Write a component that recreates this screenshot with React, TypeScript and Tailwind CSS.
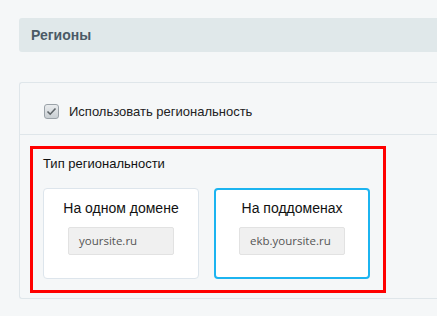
export default function App() {
  return (
    <div className="min-h-[316px] w-[437px] overflow-hidden bg-[#f5f7f8] pt-[18px] pl-[19px] font-['Liberation_Sans',Arial,sans-serif]">
      <div className="flex h-[34px] w-[440px] items-center rounded-l-[3px] bg-[#e0e8ea] pl-3 text-[14px] font-bold text-[#4b5a66]">
        Регионы
      </div>
      <div className="mt-[30px] w-[440px] rounded-l-[3px] border border-r-0 border-[#dfe6ea] bg-[#f5f7f8]">
        <div className="flex h-[52px] items-start border-b border-[#dfe6ea] pt-[21px] pl-[24px]">
          <span className="flex h-[15px] w-[15px] items-center justify-center rounded-[3px] border border-[#9aa2a8] bg-gradient-to-b from-[#e9ecee] to-[#c9cfd3]">
            <svg width="11" height="9" viewBox="0 0 11 9" fill="none">
              <path d="M1.5 4.5 L4.2 7.2 L9.5 1.5" stroke="#5d6468" strokeWidth="1.6" />
            </svg>
          </span>
          <span className="ml-[10px] text-[13px] leading-[15px] text-[#222]">Использовать региональность</span>
        </div>
        <div className="pt-[11px] pb-[5px] pl-[10px]">
          <div className="w-[356px] border-[3px] border-[#ff0000] px-[10px] pt-[5px] pb-[11px]">
            <div className="text-[13px] text-[#111]">Тип региональности</div>
            <div className="mt-[14px] flex gap-[15px]">
              <div className="flex h-[91px] w-[156px] flex-col items-center rounded-[4px] border border-[#dde5ec] bg-white pt-[9px]">
                <div className="text-[14px] text-[#111]">На одном домене</div>
                <div className="mt-[8px] flex h-[28px] w-[106px] items-center rounded-[2px] border border-[#e2e2e2] bg-[#f0f0f0] pl-[10px] font-['Open_Sans',sans-serif] text-[11.5px] text-[#555]">
                  yoursite.ru
                </div>
              </div>
              <div className="flex h-[91px] w-[156px] flex-col items-center rounded-[4px] border-2 border-[#1cb4f0] bg-white pt-[8px]">
                <div className="text-[14px] text-[#111]">На поддоменах</div>
                <div className="mt-[8px] flex h-[28px] w-[106px] items-center rounded-[2px] border border-[#e2e2e2] bg-[#f0f0f0] pl-[10px] font-['Open_Sans',sans-serif] text-[11.5px] text-[#555]">
                  ekb.yoursite.ru
                </div>
              </div>
            </div>
          </div>
        </div>
      </div>
    </div>
  );
}
